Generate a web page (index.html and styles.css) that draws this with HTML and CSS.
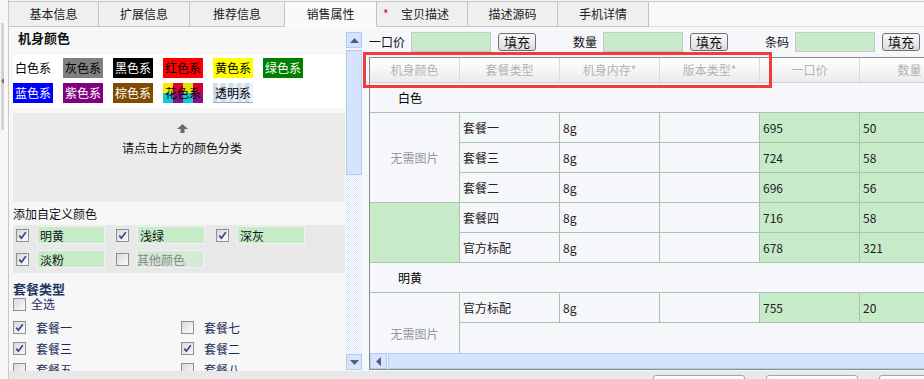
FILE: index.html
```html
<!DOCTYPE html>
<html lang="zh-CN">
<head>
<meta charset="utf-8">
<title>销售属性</title>
<link rel="stylesheet" href="styles.css">
</head>
<body>
<div class="app">
  <div class="edge"><div class="handle"><span class="handle-arrow"></span></div></div>
  <div class="main">
    <div class="tabs">
      <div class="tab tab-w90">基本信息</div>
      <div class="tab">扩展信息</div>
      <div class="tab tab-w95">推荐信息</div>
      <div class="tab tab-w92 tab-active">销售属性</div>
      <div class="tab tab-req"><span class="req">*</span>宝贝描述</div>
      <div class="tab tab-w90">描述源码</div>
      <div class="tab">手机详情</div>
      <div class="tabs-fill"></div>
    </div>
    <div class="content">
      <div class="left">
        <div class="lp-title">机身颜色</div>
        <div class="swatches">
          <span class="sw sw-white">白色系</span>
          <span class="sw sw-gray">灰色系</span>
          <span class="sw sw-black">黑色系</span>
          <span class="sw sw-red">红色系</span>
          <span class="sw sw-yellow">黄色系</span>
          <span class="sw sw-green">绿色系</span>
          <span class="sw sw-blue">蓝色系</span>
          <span class="sw sw-purple">紫色系</span>
          <span class="sw sw-brown">棕色系</span>
          <span class="sw sw-multi">花色系</span>
          <span class="sw sw-clear">透明系</span>
        </div>
        <div class="hint">
          <svg width="11" height="9" viewBox="0 0 11 9"><path d="M0 5 L5.5 0 L11 5 Z" fill="#6a6a6a"/><rect x="3.5" y="5" width="4" height="4" fill="#6a6a6a"/></svg>
          <div class="hint-text">请点击上方的颜色分类</div>
        </div>
        <div class="sub">添加自定义颜色</div>
        <div class="custom">
          <div class="crow">
            <div class="ci"><span class="cb"><svg width="9" height="9" viewBox="0 0 9 9"><path d="M1.3 4.6 L3.4 7.2 L7.8 1.2" fill="none" stroke="#34479a" stroke-width="1.7"/></svg></span><input class="cinput" type="text" value="明黄" readonly></div>
            <div class="ci"><span class="cb"><svg width="9" height="9" viewBox="0 0 9 9"><path d="M1.3 4.6 L3.4 7.2 L7.8 1.2" fill="none" stroke="#34479a" stroke-width="1.7"/></svg></span><input class="cinput" type="text" value="浅绿" readonly></div>
            <div class="ci"><span class="cb"><svg width="9" height="9" viewBox="0 0 9 9"><path d="M1.3 4.6 L3.4 7.2 L7.8 1.2" fill="none" stroke="#34479a" stroke-width="1.7"/></svg></span><input class="cinput" type="text" value="深灰" readonly></div>
          </div>
          <div class="crow">
            <div class="ci"><span class="cb"><svg width="9" height="9" viewBox="0 0 9 9"><path d="M1.3 4.6 L3.4 7.2 L7.8 1.2" fill="none" stroke="#34479a" stroke-width="1.7"/></svg></span><input class="cinput" type="text" value="淡粉" readonly></div>
            <div class="ci"><span class="cb"></span><input class="cinput cinput-dis" type="text" value="其他颜色" readonly></div>
          </div>
        </div>
        <div class="pkg-title">套餐类型</div>
        <div class="selall"><span class="cb"></span><span>全选</span></div>
        <div class="pkg-grid">
          <div class="pkg"><span class="cb"><svg width="9" height="9" viewBox="0 0 9 9"><path d="M1.3 4.6 L3.4 7.2 L7.8 1.2" fill="none" stroke="#34479a" stroke-width="1.7"/></svg></span><span>套餐一</span></div>
          <div class="pkg"><span class="cb"></span><span>套餐七</span></div>
          <div class="pkg"><span class="cb"><svg width="9" height="9" viewBox="0 0 9 9"><path d="M1.3 4.6 L3.4 7.2 L7.8 1.2" fill="none" stroke="#34479a" stroke-width="1.7"/></svg></span><span>套餐三</span></div>
          <div class="pkg"><span class="cb"><svg width="9" height="9" viewBox="0 0 9 9"><path d="M1.3 4.6 L3.4 7.2 L7.8 1.2" fill="none" stroke="#34479a" stroke-width="1.7"/></svg></span><span>套餐二</span></div>
          <div class="pkg"><span class="cb"></span><span>套餐五</span></div>
          <div class="pkg"><span class="cb"></span><span>套餐八</span></div>
        </div>
      </div>
      <div class="vscroll">
        <div class="sb-btn"><svg width="9" height="5" viewBox="0 0 9 5"><path d="M0 5 L4.5 0 L9 5 Z" fill="#4c5f82"/></svg></div>
        <div class="sb-thumb"></div>
        <div class="sb-track"></div>
        <div class="sb-btn"><svg width="9" height="5" viewBox="0 0 9 5"><path d="M0 0 L4.5 5 L9 0 Z" fill="#4c5f82"/></svg></div>
      </div>
      <div class="right">
        <div class="toolbar">
          <div class="tgroup"><span class="tl">一口价</span><input class="ti" type="text" readonly><span class="tb">填充</span></div>
          <div class="tgroup"><span class="tl">数量</span><input class="ti" type="text" readonly><span class="tb">填充</span></div>
          <div class="tgroup"><span class="tl">条码</span><input class="ti" type="text" readonly><span class="tb">填充</span></div>
        </div>
        <div class="gbox">
          <div class="ghead">
            <div class="hc hc-first">机身颜色</div>
            <div class="hc">套餐类型</div>
            <div class="hc">机身内存*</div>
            <div class="hc">版本类型*</div>
            <div class="hc">一口价</div>
            <div class="hc">数量</div>
          </div>
          <div class="gbody">
            <table class="grid">
              <colgroup><col class="c1"><col class="cn"><col class="cn"><col class="cn"><col class="cn"><col class="cn"></colgroup>
              <tbody>
                <tr><td class="grp" colspan="6">白色</td></tr>
                <tr><td class="img" rowspan="3">无需图片</td><td>套餐一</td><td>8g</td><td></td><td class="green">695</td><td class="green">50</td></tr>
                <tr><td>套餐三</td><td>8g</td><td></td><td class="green">724</td><td class="green">58</td></tr>
                <tr><td>套餐二</td><td>8g</td><td></td><td class="green">696</td><td class="green">56</td></tr>
                <tr><td class="img green" rowspan="2"></td><td>套餐四</td><td>8g</td><td></td><td class="green">716</td><td class="green">58</td></tr>
                <tr><td>官方标配</td><td>8g</td><td></td><td class="green">678</td><td class="green">321</td></tr>
                <tr><td class="grp" colspan="6">明黄</td></tr>
                <tr><td class="img" rowspan="2">无需图片</td><td>官方标配</td><td>8g</td><td></td><td class="green">755</td><td class="green">20</td></tr>
                <tr><td class="filler" colspan="5"></td></tr>
              </tbody>
            </table>
          </div>
          <div class="hscroll">
            <div class="hs-btn"><svg width="5" height="9" viewBox="0 0 5 9"><path d="M5 0 L0 4.5 L5 9 Z" fill="#4c5f82"/></svg></div>
            <div class="hs-track"></div>
          </div>
        </div>
      </div>
    </div>
    <div class="footer">
      <span class="fbtn"></span><span class="fbtn"></span><span class="fbtn"></span>
    </div>
  </div>
  <div class="annot"></div>
</div>
</body>
</html>
```
FILE: styles.css
```css
* { box-sizing: border-box; }
html, body { margin: 0; padding: 0; }
body {
  width: 924px;
  height: 379px;
  overflow: hidden;
  background: #f7f7f7;
  font: 12px/1.3 "Noto Sans CJK SC", "Noto Sans", sans-serif;
  color: #222;
}
.app { position: relative; display: flex; height: 379px; }

.edge {
  flex: none;
  width: 9px;
  border-right: 1px solid #c8c8c8;
  padding: 23px 0 0 1px;
  background: #f7f7f7;
}
.handle { position: relative; width: 3px; height: 107px; background: #d3d3d3; }
.handle-arrow {
  position: absolute;
  left: 0;
  top: 55px;
  width: 0; height: 0;
  border-top: 3px solid transparent;
  border-bottom: 3px solid transparent;
  border-right: 3px solid #777;
}

.main { flex: 1; min-width: 0; display: flex; flex-direction: column; }

.tabs {
  flex: none;
  display: flex;
  margin-top: 1px;
  height: 26px;
  border-top: 1px solid #c6c6c6;
}
.tab {
  flex: none;
  width: 91px;
  height: 25px;
  line-height: 24px;
  text-align: center;
  background: #efefef;
  border-right: 1px solid #c3c3c3;
  border-bottom: 1px solid #c3c3c3;
  color: #222;
}
.tab-w90 { width: 90px; }
.tab-w92 { width: 92px; }
.tab-w95 { width: 95px; }
.tab-active { background: #fafafa; border-bottom-color: #fafafa; }
.tab-req { text-align: left; padding-left: 6px; }
.req { display: inline-block; width: 18px; color: #e4001b; }
.tabs-fill { flex: 1; height: 25px; border-bottom: 1px solid #dcdcdc; background: #f9f9f9; }

.content { flex: none; display: flex; height: 344px; }

/* left panel */
.left {
  flex: none;
  width: 337px;
  padding: 0 1px 0 4px;
  background: #f7f7f7;
  overflow: hidden;
}
.lp-title {
  height: 22px;
  line-height: 22px;
  padding-left: 5px;
  font-size: 13px;
  font-weight: bold;
  color: #111;
}
.swatches {
  margin-top: 6px;
  height: 53px;
  padding-top: 3px;
  background: #fff;
  display: flex;
  flex-wrap: wrap;
  align-content: flex-start;
  gap: 5px 10px;
}
.sw { width: 40px; height: 20px; line-height: 20px; text-align: center; color: #000; }
.sw-white { background: #fff; }
.sw-gray { background: #808080; }
.sw-black { background: #000; color: #fff; }
.sw-red { background: #ff0000; }
.sw-yellow { background: #ffff00; }
.sw-green { background: #008000; color: #fff; }
.sw-blue { background: #0000ff; color: #fff; }
.sw-purple { background: #800080; color: #fff; }
.sw-brown { background: #804c00; color: #fff; }
.sw-multi {
  background:
    linear-gradient(90deg, #ffe600 0 25%, #d8002e 25% 50%, #e8e000 50% 75%, #d60030 75%) top / 100% 50% no-repeat,
    linear-gradient(90deg, #10c8d6 0 25%, #8a1088 25% 50%, #10c8d6 50% 75%, #8a1088 75%) bottom / 100% 50% no-repeat;
}
.sw-clear {
  background: repeating-linear-gradient(90deg, #c9dcf2 0 4px, #eef0f6 4px 8px);
  border-bottom: 1px solid #a898e0;
  line-height: 19px;
}

.hint {
  margin-top: 5px;
  height: 89px;
  padding: 11px 0 0 6px;
  background: #ebebeb;
  display: flex;
  flex-direction: column;
  align-items: center;
}
.hint svg { display: block; }
.hint-text { margin-top: 7px; line-height: 16px; color: #111; }

.sub { margin-top: 4px; line-height: 16px; color: #111; }
.custom {
  margin-top: 3px;
  height: 48px;
  padding-top: 1px;
  background: #e8e8e8;
  display: flex;
  flex-direction: column;
  gap: 6px;
}
.crow { display: flex; height: 18px; }
.ci { width: 100px; display: flex; align-items: center; }
.ci .cb { margin-left: 3px; }
.cinput {
  margin: 0 0 0 8px;
  width: 68px;
  height: 18px;
  padding: 0 0 0 2px;
  border: 1px solid #f2f2f2;
  background: #c6ebc9;
  font: 12px/16px "Noto Sans CJK SC", "Noto Sans", sans-serif;
  color: #111;
  outline: none;
}
.cinput-dis { background: #d5e9d7; color: #888; padding-left: 0; margin-left: 7px; }

.cb {
  flex: none;
  width: 13px;
  height: 13px;
  border: 1px solid #8e8f8f;
  background: linear-gradient(135deg, #d9d9d9, #fbfbfb);
  display: inline-flex;
  align-items: center;
  justify-content: center;
}
.cb svg { display: block; }

.pkg-title {
  margin-top: 9px;
  line-height: 14px;
  font-size: 13px;
  font-weight: bold;
  color: #1f3463;
}
.selall { display: flex; align-items: center; gap: 5px; height: 14px; margin-top: 1px; color: #1c2c5a; }
.pkg-grid {
  margin-top: 6px;
  display: grid;
  grid-template-columns: 168px 168px;
  grid-auto-rows: 21px;
  color: #1c2c5a;
}
.pkg { display: flex; align-items: center; gap: 10px; }

/* vertical scrollbar */
.vscroll {
  flex: none;
  width: 16px;
  padding: 5px 0 1px;
  display: flex;
  flex-direction: column;
  background: #f5f7fa;
}
.sb-btn {
  flex: none;
  width: 16px;
  height: 16px;
  background: #d5e4fc;
  border: 1px solid #b4cbf0;
  display: flex;
  align-items: center;
  justify-content: center;
}
.sb-btn svg { display: block; }
.sb-thumb {
  flex: none;
  margin-top: 2px;
  height: 125px;
  background: #d5e4fc;
  border: 1px solid #b4cbf0;
}
.sb-track {
  flex: 1;
  background: repeating-conic-gradient(#dde7f7 0 25%, #fbfcfe 0 50%) 0 0 / 2px 2px;
}

/* right panel */
.right {
  flex: 1;
  min-width: 0;
  overflow: hidden;
  padding: 5px 0 0 7px;
  background: #f5f7fa;
}
.toolbar { display: flex; align-items: center; height: 20px; }
.tgroup { display: flex; align-items: center; flex: none; }
.tgroup + .tgroup { margin-left: 37px; }
.tl { color: #111; }
.ti {
  margin: 0 0 0 6px;
  width: 80px;
  height: 20px;
  padding: 0;
  border: 1px solid #c9c9c9;
  background: #c7ebc9;
  outline: none;
}
.tb {
  margin-left: 7px;
  width: 38px;
  height: 18px;
  border: 1px solid #6f6f6f;
  border-radius: 3px;
  background: linear-gradient(#f8f8f8, #dcdcdc);
  font-size: 13px;
  line-height: 16px;
  text-align: center;
  color: #111;
}

.gbox {
  margin-top: 5px;
  width: 600px;
  border: 1px solid #8c8c8c;
  border-right: none;
}
.ghead {
  display: flex;
  height: 25px;
  border-bottom: 1px solid #d2d2d2;
  background: linear-gradient(#fefefe 0%, #f7f7f7 45%, #ebebeb 100%);
}
.hc {
  flex: none;
  width: 100px;
  border-right: 1px solid #dadada;
  text-align: center;
  line-height: 24px;
  color: #b3b3b3;
}
.hc-first { width: 90px; }

.gbody { height: 270px; overflow: hidden; }
.grid {
  border-collapse: separate;
  border-spacing: 0;
  table-layout: fixed;
  width: 590px;
}
.c1 { width: 90px; }
.cn { width: 100px; }
.grid td {
  height: 30px;
  padding: 0 0 0 3px;
  border-right: 1px solid #a9c6ab;
  border-bottom: 1px solid #a9c6ab;
  white-space: nowrap;
  color: #222;
  vertical-align: middle;
}
.grid td.grp { border-right: none; padding-left: 28px; color: #000; }
.grid td.img { padding: 0; text-align: center; color: #999; }
.grid td.green { background: #c7ebc9; }
.grid td.filler { height: 53px; border-right: none; }

.hscroll { display: flex; height: 16px; }
.hs-btn {
  flex: none;
  width: 17px;
  height: 16px;
  background: #d5e4fc;
  border: 1px solid #b4cbf0;
  display: flex;
  align-items: center;
  justify-content: center;
}
.hs-btn svg { display: block; }
.hs-track {
  flex: 1;
  margin-left: 1px;
  background: #d5e4fc;
  border: 1px solid #b4cbf0;
  border-right: none;
}

.footer {
  flex: none;
  height: 8px;
  background: #e8e8e8;
  display: flex;
  gap: 21px;
  padding-left: 644px;
  overflow: hidden;
}
.fbtn {
  flex: none;
  width: 92px;
  height: 24px;
  margin-top: 4px;
  background: #fff;
  border: 1px solid #a5a5a5;
  border-radius: 3px;
}

.annot {
  position: absolute;
  left: 363px;
  top: 52px;
  width: 409px;
  height: 36px;
  border: 3px solid #f23b3b;
}
```
